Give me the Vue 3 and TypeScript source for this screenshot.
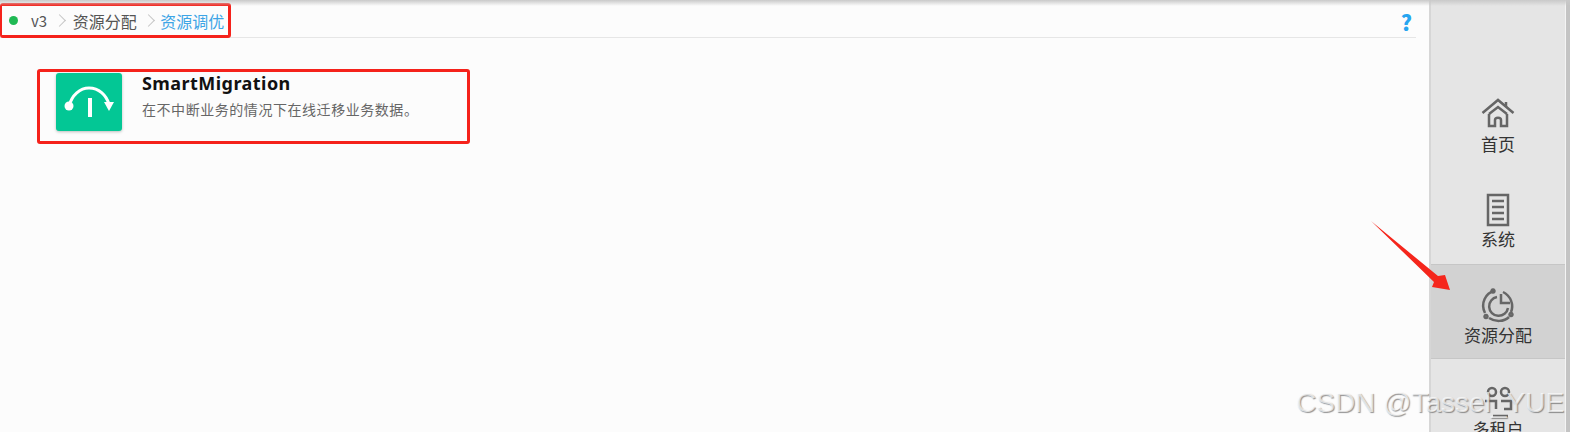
<template>
  <div class="page">
    <main class="main">
      <header class="topbar">
        <nav class="crumbs">
          <span class="dot"></span>
          <span class="crumb version">v3</span>
          <span class="sep"></span>
          <span class="crumb">资源分配</span>
          <span class="sep"></span>
          <span class="crumb current">资源调优</span>
        </nav>
        <span class="help">?</span>
      </header>
      <section class="card">
        <div class="card-icon">
          <svg width="66" height="58" viewBox="0 0 66 58" fill="none">
            <path d="M13 33C16 22 24 15 33 15C43 15 50 22 53 31" stroke="#fff" stroke-width="3" />
            <circle cx="13" cy="33" r="4.500" fill="#fff" />
            <path d="M48 29H58L53 38Z" fill="#fff" />
            <rect x="32" y="25" width="4" height="19" fill="#fff" />
          </svg>
        </div>
        <div class="card-text">
          <h3>SmartMigration</h3>
          <p>在不中断业务的情况下在线迁移业务数据。</p>
        </div>
      </section>
    </main>

    <aside class="sidebar">
      <div v-for="item in navItems" :key="item.label" class="nav-item" :class="{ active: item.active }">
        <svg width="34" height="34" viewBox="0 0 34 34" fill="none" stroke="#666" stroke-width="2.500">
          <path v-for="d in item.paths" :key="d" :d="d" />
        </svg>
        <span>{{ item.label }}</span>
      </div>
    </aside>

    <svg class="arrow" width="84" height="76" viewBox="0 0 84 76">
      <path d="M2 1L69 56L76 55L81 70L63 67L65 62Z" fill="#f5261c" />
    </svg>
    <span class="watermark">CSDN @Tassel_YUE</span>
  </div>
</template>

<script setup lang="ts">
interface NavItem {
  label: string
  active?: boolean
  paths: string[]
}

const navItems: NavItem[] = [
  {
    label: '首页',
    paths: [
      'M1.500 16L17 3L32.500 16',
      'M8 17V29H14V23C14 20 20 20 20 23V29H26V17',
      'M8 17L17 10L26 17',
      'M25 5V10',
    ],
  },
  {
    label: '系统',
    paths: ['M7 3H27V33H7Z', 'M11 9H23', 'M11 15H23', 'M11 21H23', 'M11 27H23'],
  },
  {
    label: '资源分配',
    active: true,
    paths: [
      'M4 25C-1 15 5 5 13 3',
      'M22 4C30 8 33 17 30 24',
      'M8 30C14 34 23 34 28 29',
      'M16 9A9.500 9.500 0 1 0 27 20',
      'M20 6V15H29',
      'M12 1.500a1.500 1.500 0 1 0 .01 0',
      'M5 27a1.500 1.500 0 1 0 .01 0',
      'M30 25a1.500 1.500 0 1 0 .01 0',
    ],
  },
  {
    label: '多租户',
    paths: [
      'M7 10A4 4 0 1 0 15 10A4 4 0 1 0 7 10',
      'M20 10A4 4 0 1 0 28 10A4 4 0 1 0 20 10',
      'M4 19H15V27',
      'M20 19H30V27H23',
      'M12 34H27',
    ],
  },
]
</script>

<style scoped>
.page {
  position: relative;
  display: flex;
  width: 1570px;
  height: 432px;
  overflow: hidden;
  padding-right: 4px;
  box-sizing: border-box;
  background: #c4c4c4;
  font-family: "Noto Sans CJK SC", "Noto Sans", sans-serif;
}
.page::before {
  content: "";
  position: absolute;
  left: 0;
  right: 0;
  top: 0;
  height: 6px;
  background: linear-gradient(#c9c9c9, rgba(220, 220, 220, 0));
}
.main {
  flex: 1;
  min-width: 0;
  background: #fcfcfc;
  padding: 3px 13px 0 0;
}
.topbar {
  display: flex;
  align-items: center;
  justify-content: space-between;
  height: 34px;
  border-bottom: 1px solid #e6e6e6;
}
.crumbs {
  display: flex;
  align-items: center;
  box-sizing: border-box;
  width: 231px;
  height: 35px;
  margin-bottom: -1px;
  padding-left: 7px;
  border: 3px solid #f5221b;
  border-left-width: 2px;
  border-radius: 3px;
  font-size: 16px;
  color: #555;
}
.version {
  font-size: 15px;
  margin-right: 1px;
}
.dot {
  width: 9px;
  height: 9px;
  border-radius: 50%;
  background: #1fb954;
  margin-right: 13px;
}
.sep {
  width: 8px;
  height: 8px;
  margin: 0 8.500px 0 7px;
  border-top: 1.500px solid #c4c4c4;
  border-right: 1.500px solid #c4c4c4;
  transform: rotate(45deg);
}
.current {
  color: #3ea5e6;
  margin-left: -1px;
}
.help {
  font-size: 21px;
  line-height: 24px;
  font-weight: 800;
  color: #27a5f0;
  margin: 3px 4px 0 0;
}
.card {
  display: flex;
  box-sizing: border-box;
  width: 433px;
  height: 75px;
  margin: 31px 0 0 37px;
  padding: 1px 0 0 16px;
  border: 3px solid #f5221b;
  border-radius: 3px;
}
.card-icon {
  width: 66px;
  height: 58px;
  border-radius: 3px;
  background: #03c795;
  box-shadow: 0 1px 3px rgba(0, 0, 0, 0.25);
}
.card-icon svg {
  display: block;
}
.card-text {
  margin-left: 20px;
}
.card-text h3 {
  margin: 0;
  font-size: 18px;
  line-height: 20px;
  letter-spacing: 0.45px;
  font-weight: 700;
  color: #111;
  font-family: "Noto Sans", sans-serif;
}
.card-text p {
  margin: 7px 0 0;
  font-size: 14px;
  line-height: 18px;
  letter-spacing: 0.55px;
  color: #666;
}
.sidebar {
  width: 137px;
  flex: none;
  box-sizing: border-box;
  padding-top: 74px;
  background: #e5e5e5;
  border-left: 2px solid #d6d6d6;
  border-right: 1px solid #f4f4f4;
}
.nav-item {
  display: flex;
  flex-direction: column;
  align-items: center;
  height: 95px;
  box-sizing: border-box;
  padding-top: 23px;
  font-size: 17px;
  line-height: 20px;
  color: #333;
}
.nav-item svg {
  overflow: visible;
}
.nav-item span {
  margin-top: 3px;
}
.nav-item.active {
  background: #d2d2d2;
  border-top: 1px solid #c6c6c6;
  border-bottom: 1px solid #c6c6c6;
}
.arrow {
  position: absolute;
  left: 1369px;
  top: 220px;
}
.watermark {
  position: absolute;
  left: 1296px;
  top: 387px;
  font-family: "Liberation Sans", sans-serif;
  font-size: 28px;
  line-height: 32px;
  color: rgba(255, 255, 255, 0.7);
  text-shadow: 1px 1px 1px rgba(90, 90, 90, 0.65);
  white-space: nowrap;
}
</style>
